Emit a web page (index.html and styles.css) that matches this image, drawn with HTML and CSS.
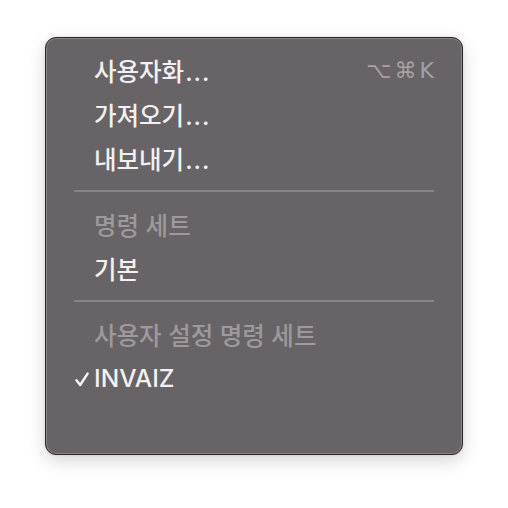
FILE: index.html
```html
<!DOCTYPE html>
<html lang="ko">
<head>
<meta charset="utf-8">
<link rel="stylesheet" href="styles.css">
</head>
<body>
<div class="menu">
  <div class="item"><span class="check"></span><span class="label">사용자화<span class="dots">...</span></span><span class="shortcut">⌥⌘K</span></div>
  <div class="item"><span class="check"></span><span class="label">가져오기<span class="dots">...</span></span></div>
  <div class="item"><span class="check"></span><span class="label">내보내기<span class="dots">...</span></span></div>
  <div class="sep"></div>
  <div class="item disabled"><span class="check"></span><span class="label">명령 세트</span></div>
  <div class="item"><span class="check"></span><span class="label">기본</span></div>
  <div class="sep"></div>
  <div class="item disabled"><span class="check"></span><span class="label">사용자 설정 명령 세트</span></div>
  <div class="item"><span class="check"><svg width="14" height="15" viewBox="0 0 14 15"><path d="M1.5 8.2 L5.2 13 L12.6 1.6" fill="none" stroke="#f4f4f4" stroke-width="2.4" stroke-linecap="round" stroke-linejoin="round"/></svg></span><span class="label">INVAIZ</span></div>
</div>
</body>
</html>
```
FILE: styles.css
```css
html, body {
  margin: 0;
  padding: 0;
  background: #ffffff;
}
body {
  width: 508px;
  height: 508px;
  font-family: "Inter", "Noto Sans CJK KR", sans-serif;
}
.menu {
  box-sizing: border-box;
  margin: 37px 0 0 45px;
  width: 418px;
  height: 418px;
  background: #686366;
  border: 1px solid #2a2829;
  border-radius: 11px;
  box-shadow: inset 0 0 0 1px #878386, 0 6px 18px rgba(0,0,0,0.16), 0 0 3px rgba(0,0,0,0.1);
  padding: 10px 0 0 0;
  display: flex;
  flex-direction: column;
}
.item {
  height: 44px;
  display: flex;
  align-items: center;
  padding: 0 28px 0 30px;
  color: #f2f0f1;
  font-size: 24.5px;
  font-weight: 500;
}
.check {
  width: 18px;
  display: flex;
  align-items: center;
  padding-top: 2px;
}
.check svg {
  margin-left: -1px;
}
.label {
  flex: 1;
}
.dots {
  letter-spacing: 1px;
  margin-left: 1px;
}
.disabled {
  color: #9d999c;
}
.shortcut {
  color: #a5a1a4;
  font-size: 22px;
  letter-spacing: 3px;
  margin-right: -3px;
  font-family: "DejaVu Sans", sans-serif;
}
.sep {
  height: 22px;
  display: flex;
  align-items: center;
  padding: 0 28px;
}
.sep::before {
  content: "";
  flex: 1;
  height: 2px;
  background: #878386;
}
```
